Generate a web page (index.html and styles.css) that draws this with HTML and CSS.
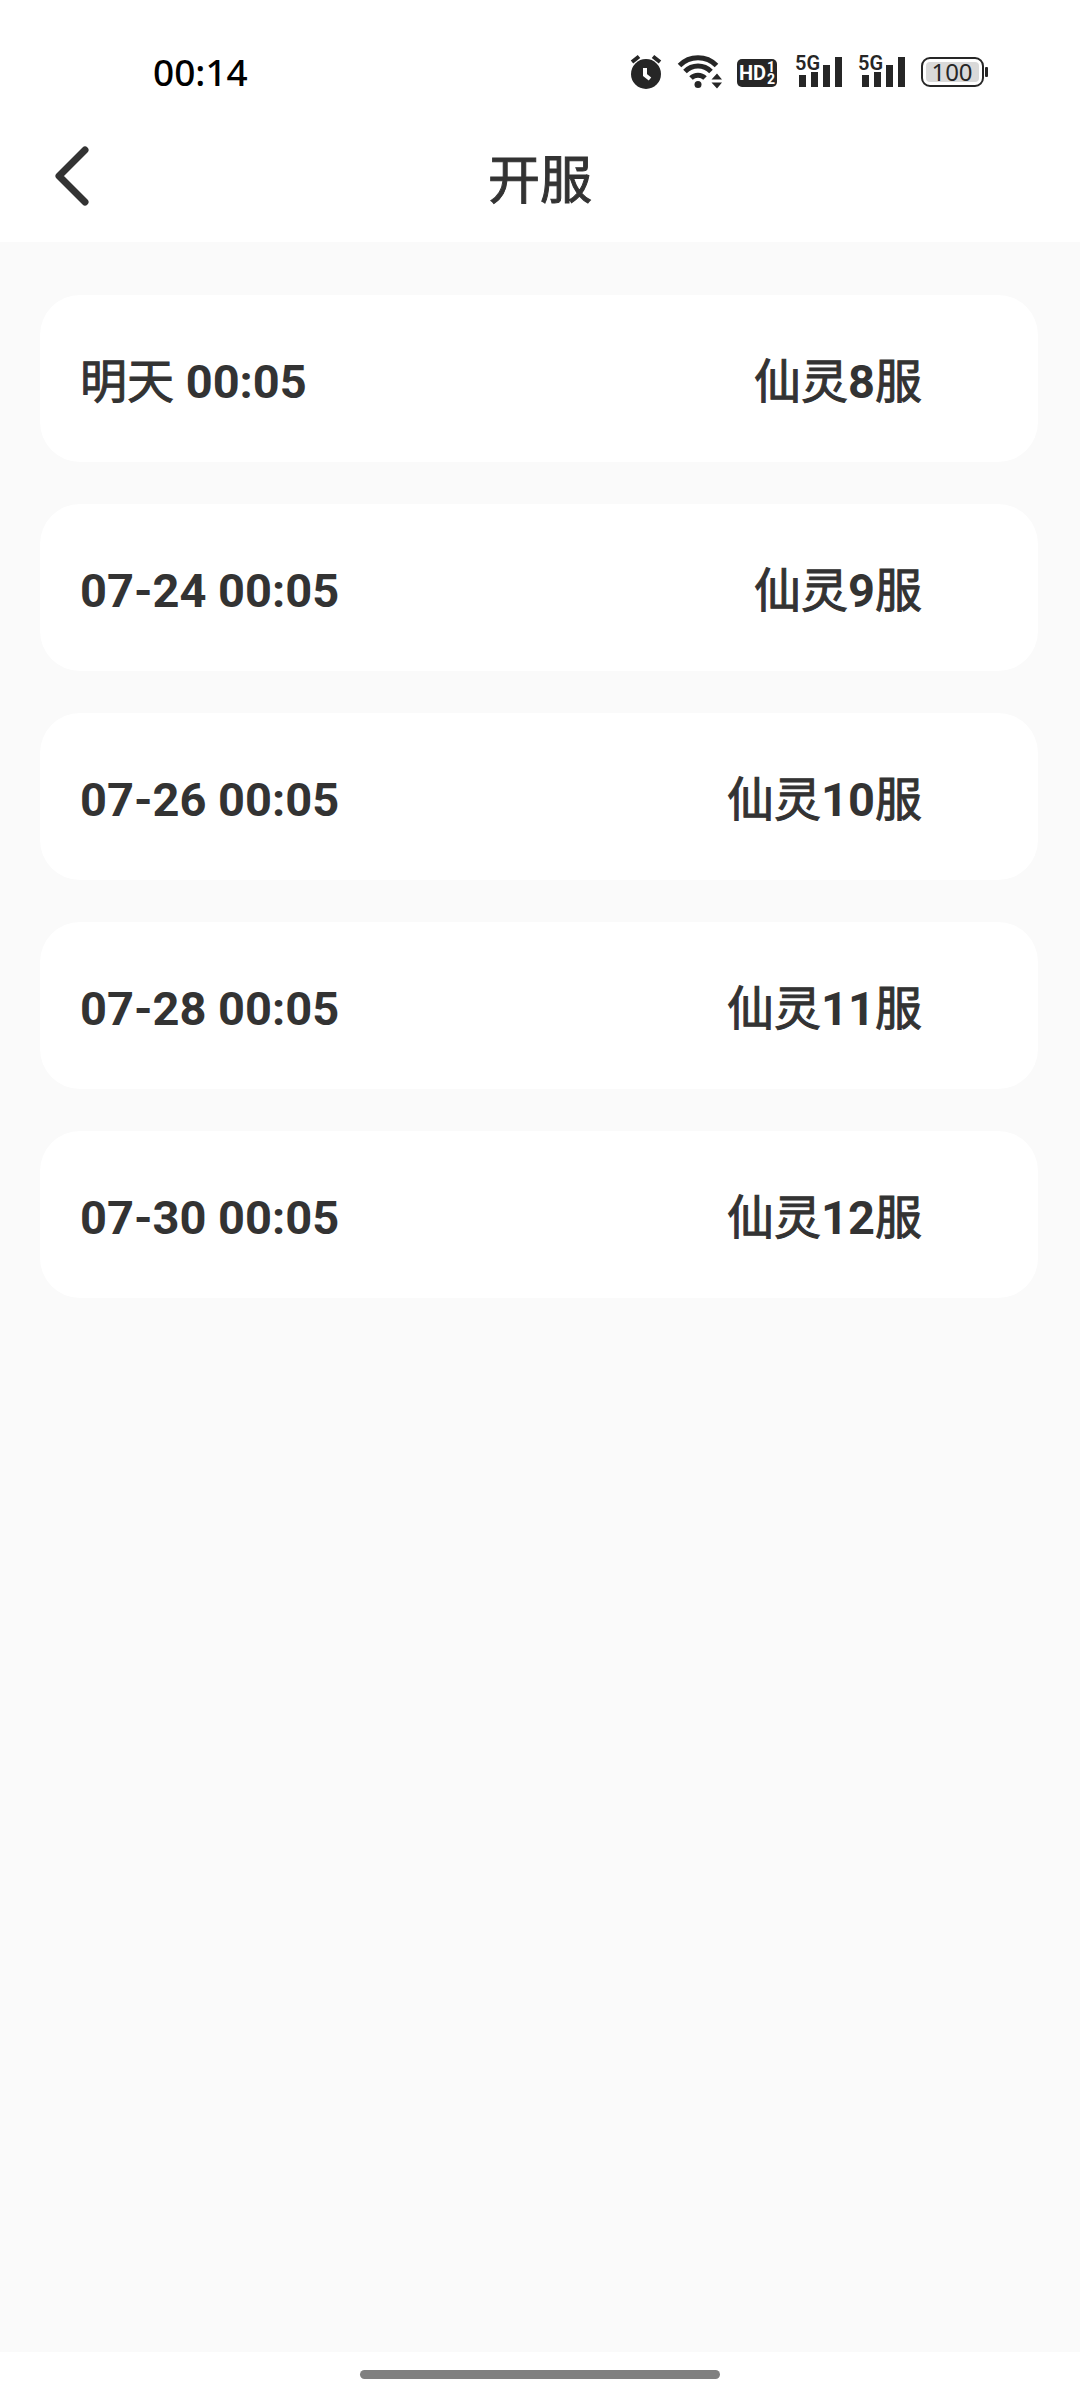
FILE: index.html
```html
<!DOCTYPE html>
<html lang="zh-CN">
<head>
<meta charset="utf-8">
<meta name="viewport" content="width=device-width, initial-scale=1">
<title>开服</title>
<link rel="stylesheet" href="styles.css">
</head>
<body>
<header class="top">
  <div class="status">
    <time class="clock">00:14</time>
    <div class="indicators">
      <svg width="32" height="36" viewBox="0 0 32 36" aria-label="闹钟">
        <circle cx="16" cy="20" r="15"/>
        <path class="bell" d="M2 8L9 2.500M30 8L23 2.500"/>
        <path class="hands" d="M15 14v7l5 4"/>
      </svg>
      <svg width="46" height="36" viewBox="0 0 46 36" aria-label="无线网络">
        <path class="arc" d="M3.500 11.500A26 26 0 0 1 40.500 11.500M9 17.500A18 18 0 0 1 35 17.500M15 24A10 10 0 0 1 29 24"/>
        <circle cx="22" cy="30.500" r="3.500"/>
        <path d="M35.500 25.500l5.500-6 5 6zM35.500 28.500l5.500 6 5-6z"/>
      </svg>
      <svg width="44" height="36" viewBox="0 0 44 36" aria-label="高清通话">
        <rect x="1" y="5" width="40" height="28" rx="5"/>
        <text class="hd" x="3" y="26">HD</text>
        <text class="hd-sim" x="31" y="18">1</text>
        <text class="hd-sim" x="31" y="30">2</text>
      </svg>
      <svg width="49" height="48" viewBox="0 -6 49 48" aria-label="信号一">
        <text class="signal-label" x="1" y="16">5G</text>
        <path d="M5 21h7v12h-7zM17 18h7v15h-7zM29 11h7v22h-7zM41 3h7v30h-7z"/>
      </svg>
      <svg width="49" height="48" viewBox="0 -6 49 48" aria-label="信号二">
        <text class="signal-label" x="1" y="16">5G</text>
        <path d="M5 21h7v12h-7zM17 18h7v15h-7zM29 11h7v22h-7zM41 3h7v30h-7z"/>
      </svg>
      <svg width="69" height="36" viewBox="0 0 69 36" aria-label="电量">
        <rect class="battery" x="2" y="4" width="61" height="28" rx="8"/>
        <rect class="charge" x="6" y="8" width="53" height="20" rx="4"/>
        <rect x="65" y="13" width="3" height="10" rx="1"/>
        <text class="percent" x="32" y="27">100</text>
      </svg>
    </div>
  </div>
  <nav class="bar">
    <button class="back" type="button" aria-label="返回">
      <svg width="36" height="60" viewBox="0 0 36 60"><path d="M30 4L4 30L30 56"/></svg>
    </button>
    <h1 class="han">开服</h1>
  </nav>
</header>
<main>
  <ul class="list">
    <li class="card"><time><span class="han">明天</span> 00:05</time><span><span class="han">仙灵</span>8<span class="han">服</span></span></li>
    <li class="card"><time>07-24 00:05</time><span><span class="han">仙灵</span>9<span class="han">服</span></span></li>
    <li class="card"><time>07-26 00:05</time><span><span class="han">仙灵</span>10<span class="han">服</span></span></li>
    <li class="card"><time>07-28 00:05</time><span><span class="han">仙灵</span>11<span class="han">服</span></span></li>
    <li class="card"><time>07-30 00:05</time><span><span class="han">仙灵</span>12<span class="han">服</span></span></li>
  </ul>
</main>
<footer class="home"><div class="pill"></div></footer>
</body>
</html>
```
FILE: styles.css
```css
* { box-sizing: border-box; }
body {
  margin: 0;
  min-height: 100vh;
  display: flex;
  flex-direction: column;
  background: #fff;
  color: #333;
  font-family: Roboto, "Noto Sans CJK SC", sans-serif;
}
.status {
  display: flex;
  align-items: center;
  justify-content: space-between;
  height: 117px;
  padding: 27px 91px 0 153px;
}
.clock {
  color: #000;
  font: 500 37px/48px "Noto Sans", sans-serif;
}
.indicators { display: flex; align-items: center; gap: 14px; fill: #262626; }
.indicators svg { display: block; }
.bell { fill: none; stroke: #262626; stroke-width: 4; }
.hands { fill: none; stroke: #fff; stroke-width: 4; }
.arc { fill: none; stroke: #262626; stroke-width: 5; }
.signal-label { font: 600 20px Roboto, sans-serif; }
.hd { fill: #fff; font: bold 20px Roboto, sans-serif; }
.hd-sim { fill: #fff; font: bold 14px Roboto, sans-serif; }
.battery { fill: #fff; stroke: #262626; stroke-width: 2; }
.charge { fill: #d9d9d9; }
.percent { font: 24px "Noto Sans", sans-serif; text-anchor: middle; }
.bar {
  display: grid;
  grid-template-columns: 1fr auto 1fr;
  align-items: center;
  height: 125px;
  padding: 0 55px;
}
.back {
  justify-self: start;
  height: 68px;
  padding: 0 0 8px;
  border: 0;
  background: none;
}
.back svg { display: block; fill: none; stroke: #333; stroke-width: 7; stroke-linecap: round; stroke-linejoin: round; }
/* Regular weight with a hairline stroke gives a medium weight */
.han { font-weight: 400; -webkit-text-stroke: 1px #333; }
h1 { margin: 0; padding-top: 4px; font-size: 52px; line-height: 72px; }
main { flex: 1; padding: 53px 42px 53px 40px; background: #fafafa; }
.list { display: grid; gap: 42px; margin: 0; padding: 0; list-style: none; }
.card {
  display: flex;
  align-items: center;
  justify-content: space-between;
  height: 167px;
  padding: 6px 116px 0 40px;
  border-radius: 40px;
  background: #fff;
  font-size: 47px;
  line-height: 64px;
  font-weight: 700;
}
.home { display: flex; justify-content: center; height: 48px; padding-top: 18px; }
.pill { width: 33.333%; height: 9px; border-radius: 5px; background: #808080; }
```
